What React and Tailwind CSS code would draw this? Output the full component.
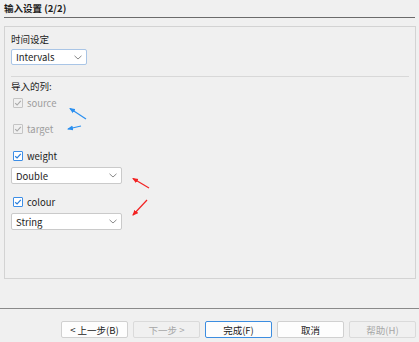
import React from "react";

function Check({ disabled }) {
  return disabled ? (
    <span className="w-[10px] h-[10px] border border-[#c4c4c4] bg-[#f0f0f0] rounded-[1px] flex items-center justify-center">
      <svg width="8" height="8" viewBox="0 0 8 8">
        <path d="M1.2 4.2 L3.1 6 L6.8 1.8" fill="none" stroke="#a8a8a8" strokeWidth="1.1" />
      </svg>
    </span>
  ) : (
    <span className="w-[10px] h-[10px] border border-[#3d8ee6] bg-white rounded-[1px] flex items-center justify-center">
      <svg width="8" height="8" viewBox="0 0 8 8">
        <path d="M1.2 4.2 L3.1 6 L6.8 1.8" fill="none" stroke="#2a7fdc" strokeWidth="1.2" />
      </svg>
    </span>
  );
}

function Chevron() {
  return (
    <svg width="8" height="5" viewBox="0 0 8 5">
      <path d="M0.5 0.8 L4 4 L7.5 0.8" fill="none" stroke="#8a8a8a" strokeWidth="1" />
    </svg>
  );
}

export default function App() {
  return (
    <div className="relative w-[419px] h-[342px] bg-[#f0f0f0] overflow-hidden font-['Noto_Sans_CJK_SC','Noto_Sans',sans-serif] text-[9.5px] text-[#1b1b1b] flex flex-col">
      {/* header */}
      <div className="ml-[4px] mr-[4px] h-[18px] border-b border-[#6b6b6b] flex items-start pt-[2px]">
        <span className="font-bold leading-[13px]">输入设置 (2/2)</span>
      </div>

      {/* panel */}
      <div className="ml-[4px] w-[412px] h-[253px] mt-[8px] border border-[#d3d3d3] pl-[6px] flex flex-col">
        <div className="mt-[4px] h-[16px] leading-[16px]">时间设定</div>
        <div className="mt-[2px] w-[76px] h-[16px] bg-white border border-[#a9c5e6] rounded-[2px] flex items-center justify-between pl-[4px] pr-[4px]">
          <span className="leading-[14px]">Intervals</span>
          <Chevron />
        </div>
        <div className="mt-[11px] mr-[6px] h-[1px] bg-[#d8d8d8]" />
        <div className="mt-[1px] h-[16px] leading-[16px]">导入的列:</div>

        <div className="mt-[1px] h-[16px] flex items-center pl-[2px] gap-[4px]">
          <Check disabled />
          <span className="text-[#9d9d9d] leading-[16px]">source</span>
        </div>
        <div className="mt-[10px] h-[16px] flex items-center pl-[2px] gap-[4px]">
          <Check disabled />
          <span className="text-[#9d9d9d] leading-[16px]">target</span>
        </div>
        <div className="mt-[11px] h-[16px] flex items-center pl-[2px] gap-[4px]">
          <Check />
          <span className="leading-[16px]">weight</span>
        </div>
        <div className="mt-[3px] w-[111px] h-[17px] bg-white border border-[#cacaca] rounded-[2px] flex items-center justify-between pl-[4px] pr-[4px]">
          <span className="leading-[14px]">Double</span>
          <Chevron />
        </div>
        <div className="mt-[10px] h-[16px] flex items-center pl-[2px] gap-[4px]">
          <Check />
          <span className="leading-[16px]">colour</span>
        </div>
        <div className="mt-[3px] w-[111px] h-[17px] bg-white border border-[#cacaca] rounded-[2px] flex items-center justify-between pl-[4px] pr-[4px]">
          <span className="leading-[14px]">String</span>
          <Chevron />
        </div>
      </div>

      {/* bottom separator */}
      <div className="mt-[29px] h-[1px] bg-[#8a8a8a]" />

      {/* buttons */}
      <div className="mt-[12px] flex justify-end pr-[3px] gap-[5px]">
        <button className="w-[67px] h-[17px] bg-[#fdfdfd] border border-[#d0d0d0] rounded-[2px] flex items-center justify-center leading-[14px]">&lt; 上一步(B)</button>
        <button className="w-[67px] h-[17px] bg-[#f0f0f0] border border-[#dadada] rounded-[2px] flex items-center justify-center leading-[14px] text-[#a6a6a6]">下一步 &gt;</button>
        <button className="w-[67px] h-[17px] bg-[#fdfdfd] border border-[#3c8de0] rounded-[2px] flex items-center justify-center leading-[14px]">完成(F)</button>
        <button className="w-[67px] h-[17px] bg-[#fdfdfd] border border-[#d0d0d0] rounded-[2px] flex items-center justify-center leading-[14px]">取消</button>
        <button className="w-[67px] h-[17px] bg-[#f0f0f0] border border-[#dadada] rounded-[2px] flex items-center justify-center leading-[14px] text-[#a6a6a6]">帮助(H)</button>
      </div>

      {/* annotation arrows */}
      <svg className="absolute left-0 top-0 pointer-events-none" width="419" height="342" viewBox="0 0 419 342">
        <defs>
          <marker id="hb" markerWidth="6" markerHeight="6" refX="5" refY="3" orient="auto" markerUnits="userSpaceOnUse">
            <path d="M0 0.5 L6 3 L0 5.5 Z" fill="#2a8ff0" />
          </marker>
          <marker id="hr" markerWidth="6" markerHeight="6" refX="5" refY="3" orient="auto" markerUnits="userSpaceOnUse">
            <path d="M0 0.5 L6 3 L0 5.5 Z" fill="#f22222" />
          </marker>
        </defs>
        <line x1="86" y1="119" x2="70" y2="108.5" stroke="#2a8ff0" strokeWidth="1.2" markerEnd="url(#hb)" />
        <line x1="81" y1="126" x2="68" y2="129" stroke="#2a8ff0" strokeWidth="1.2" markerEnd="url(#hb)" />
        <line x1="149" y1="188" x2="133" y2="178.5" stroke="#f22222" strokeWidth="1.2" markerEnd="url(#hr)" />
        <line x1="147" y1="200" x2="133" y2="215" stroke="#f22222" strokeWidth="1.2" markerEnd="url(#hr)" />
      </svg>
    </div>
  );
}
